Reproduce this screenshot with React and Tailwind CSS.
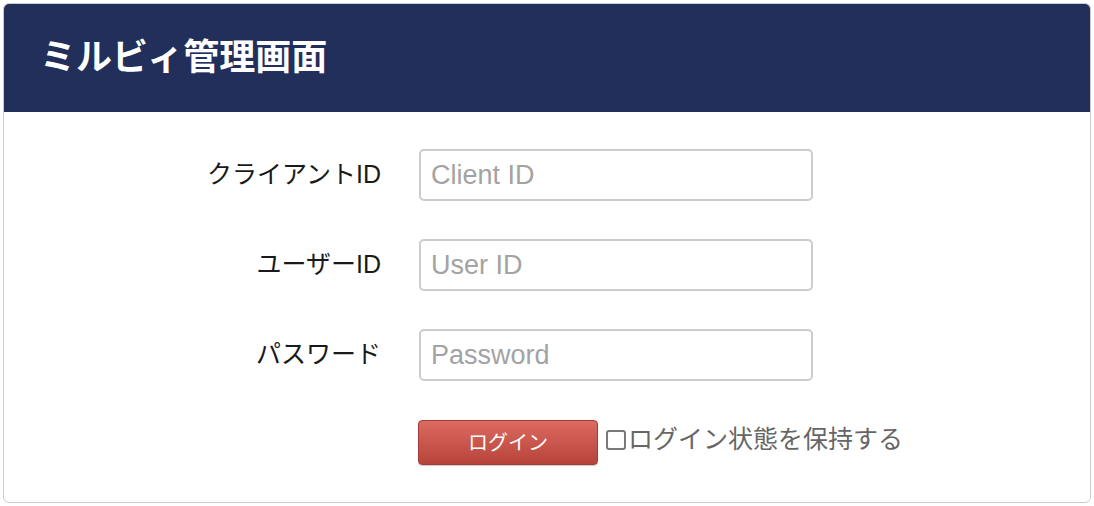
import React from 'react';

const fields = [
  { label: 'クライアントID', placeholder: 'Client ID', type: 'text' },
  { label: 'ユーザーID', placeholder: 'User ID', type: 'text' },
  { label: 'パスワード', placeholder: 'Password', type: 'password' },
];

const font = { fontFamily: '"Liberation Sans", "Noto Sans CJK JP", sans-serif' };

const App = () => {
  return (
    <div className="w-[1094px] h-[506px] bg-white p-[3px]" style={font}>
      <div className="h-[500px] border border-[#cccccc] rounded-[6px] overflow-hidden flex flex-col">
        {/* Header */}
        <div className="h-[108px] bg-[#222f5b] flex items-center pl-[36px]">
          <h1 className="text-[36px] font-bold text-white leading-none">ミルビィ管理画面</h1>
        </div>

        {/* Form */}
        <div className="flex flex-col pt-[37px]">
          {fields.map((f) => (
            <div key={f.label} className="flex items-center mb-[38px]">
              <label className="w-[377px] text-right text-[25px] text-[#1a1a1a]">{f.label}</label>
              <input
                type={f.type}
                placeholder={f.placeholder}
                className="ml-[38px] w-[394px] h-[52px] border-2 border-[#cccccc] rounded-[5px] px-[10px] text-[27px] text-[#333] placeholder:text-[#a3a3a3] outline-none"
                style={font}
              />
            </div>
          ))}

          {/* Login row */}
          <div className="flex items-center ml-[414px] mt-[1px]">
            <button
              className="w-[180px] h-[45px] rounded-[4px] border border-[#a33d35] bg-gradient-to-b from-[#dd6a60] to-[#b6443b] text-white text-[20px] shadow-[0_1px_1px_rgba(0,0,0,0.2)]"
              style={font}
            >
              ログイン
            </button>
            <label className="flex items-center ml-[8px] mb-[6px] text-[25px] text-[#666666] leading-none">
              <span className="shrink-0 block w-[20px] h-[20px] border-2 border-[#7a7a7a] rounded-[3px] mr-[2px] bg-white" />
              ログイン状態を保持する
            </label>
          </div>
        </div>
      </div>
    </div>
  );
};

export default App;
